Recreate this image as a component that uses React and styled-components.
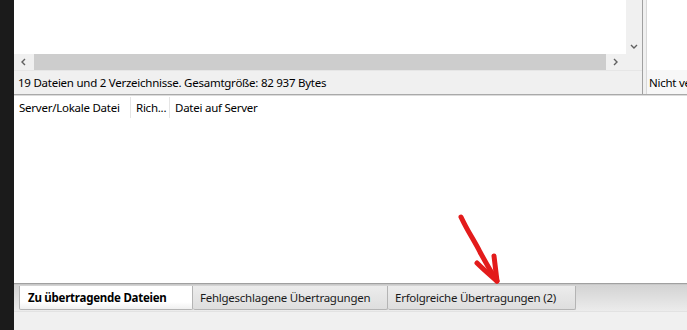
import React from "react";
import styled, { createGlobalStyle } from "styled-components";

const Global = createGlobalStyle`
  html, body { margin: 0; padding: 0; background: #1b1b1b; }
  body { font-family: "Noto Sans", "Open Sans", sans-serif; font-size: 11.5px; letter-spacing: -0.25px; color: #000; }
  #root { width: 687px; height: 330px; overflow: hidden; }
`;

const Window = styled.div`
  position: relative;
  display: flex;
  width: 687px;
  height: 330px;
  overflow: hidden;
`;

const DarkStrip = styled.div`
  width: 14px;
  flex: none;
  background: #1b1b1b;
`;

const Main = styled.div`
  flex: 1;
  display: flex;
  flex-direction: column;
  min-width: 0;
  background: #fff;
`;

const TopArea = styled.div`
  display: flex;
  height: 94px;
  flex: none;
  border-bottom: 1px solid #a9a9a9;
  box-shadow: 0 1px 0 #dcdcdc;
`;

const LeftColumn = styled.div`
  width: 628px;
  flex: none;
  display: flex;
  flex-direction: column;
`;

const ListRow = styled.div`
  display: flex;
  height: 54px;
`;

const ListContent = styled.div`
  flex: 1;
  background: #fff;
`;

const VScroll = styled.div`
  width: 16px;
  flex: none;
  background: #f0f0f0;
  display: flex;
  flex-direction: column;
  justify-content: flex-end;
  align-items: center;
  padding-bottom: 3px;
  box-sizing: border-box;
`;

const HScrollRow = styled.div`
  display: flex;
  height: 16px;
  background: #f0f0f0;
`;

const HScroll = styled.div`
  flex: 1;
  display: flex;
  align-items: center;
`;

const ArrowBtn = styled.div`
  width: 20px;
  flex: none;
  display: flex;
  align-items: center;
  justify-content: center;
`;

const Thumb = styled.div`
  flex: 1;
  height: 16px;
  background: #cdcdcd;
`;

const Corner = styled.div`
  width: 16px;
  flex: none;
  background: #f0f0f0;
`;

const StatusBar = styled.div`
  flex: 1;
  display: flex;
  align-items: center;
  padding-left: 4px;
  background: #f0f0f0;
  white-space: nowrap;
  overflow: hidden;
  border-top: 1px solid #e6e6e6;
`;

const Splitter = styled.div`
  width: 5px;
  flex: none;
  background: #f0f0f0;
  border-left: 1px solid #a0a0a0;
  border-right: 1px solid #d8d8d8;
  box-sizing: border-box;
`;

const RightColumn = styled.div`
  flex: 1;
  min-width: 0;
  display: flex;
  flex-direction: column;
  overflow: hidden;
`;

const RightList = styled.div`
  height: 70px;
  background: #fff;
`;

const RightStatus = styled.div`
  flex: 1;
  display: flex;
  align-items: center;
  padding-left: 2px;
  background: #f7f7f7;
  white-space: nowrap;
  overflow: hidden;
`;

const LowerPane = styled.div`
  flex: 1;
  display: flex;
  flex-direction: column;
  background: #fff;
  margin-top: 2px;
`;

const HeaderRow = styled.div`
  display: flex;
  height: 21px;
  flex: none;
`;

const HeaderCell = styled.div`
  width: ${(p) => p.$w}px;
  flex: ${(p) => (p.$w ? "none" : "1")};
  box-sizing: border-box;
  padding-left: 5px;
  display: flex;
  align-items: center;
  white-space: nowrap;
  border-right: ${(p) => (p.$last ? "none" : "1px solid #e5e5e5")};
`;

const ListBody = styled.div`
  flex: 1;
  background: #fff;
`;

const TabBar = styled.div`
  height: 28px;
  flex: none;
  display: flex;
  align-items: flex-start;
  padding-left: 5px;
  padding-top: 2px;
  box-sizing: border-box;
  border-top: 1px solid #a0a0a0;
  background: linear-gradient(#d2d2d2, #ececec);
  box-shadow: inset 0 1px 0 #c8c8c8;
`;

const Tab = styled.div`
  box-sizing: border-box;
  width: ${(p) => p.$w}px;
  height: 24px;
  display: flex;
  align-items: center;
  padding-left: ${(p) => (p.$active ? 8 : 7)}px;
  white-space: nowrap;
  font-weight: ${(p) => (p.$active ? 700 : 400)};
  border: 1px solid #b4b4b4;
  border-top: none;
  border-left: ${(p) => (p.$first ? "1px solid #b4b4b4" : "none")};
  border-radius: 0 0 2px 2px;
  background: ${(p) =>
    p.$active
      ? "linear-gradient(#ffffff 70%, #f0f0f0)"
      : "linear-gradient(#ececec, #dedede)"};
  color: ${(p) => (p.$active ? "#000" : "#1a1a1a")};
`;

const BottomStrip = styled.div`
  height: 18px;
  flex: none;
  background: #f0f0f0;
  border-top: 1px solid #e2e2e2;
`;

const Annotation = styled.svg`
  position: absolute;
  left: 0;
  top: 0;
  pointer-events: none;
`;

const Chevron = ({ dir }) => {
  const paths = {
    left: "M5 1 L2 4 L5 7",
    right: "M2 1 L5 4 L2 7",
    down: "M1 2 L4 5 L7 2",
  };
  return (
    <svg width="8" height="8" viewBox="0 0 8 8">
      <path d={paths[dir]} fill="none" stroke="#606060" strokeWidth="1.4" />
    </svg>
  );
};

export default function App() {
  return (
    <>
      <Global />
      <Window>
        <DarkStrip />
        <Main>
          <TopArea>
            <LeftColumn>
              <ListRow>
                <ListContent />
                <VScroll>
                  <Chevron dir="down" />
                </VScroll>
              </ListRow>
              <HScrollRow>
                <HScroll>
                  <ArrowBtn>
                    <Chevron dir="left" />
                  </ArrowBtn>
                  <Thumb />
                  <ArrowBtn>
                    <Chevron dir="right" />
                  </ArrowBtn>
                </HScroll>
                <Corner />
              </HScrollRow>
              <StatusBar>19 Dateien und 2 Verzeichnisse. Gesamtgröße: 82 937 Bytes</StatusBar>
            </LeftColumn>
            <Splitter />
            <RightColumn>
              <RightList />
              <RightStatus>Nicht verbunden</RightStatus>
            </RightColumn>
          </TopArea>
          <LowerPane>
            <HeaderRow>
              <HeaderCell $w={117}>Server/Lokale Datei</HeaderCell>
              <HeaderCell $w={39}>Rich...</HeaderCell>
              <HeaderCell $last>Datei auf Server</HeaderCell>
            </HeaderRow>
            <ListBody />
            <TabBar>
              <Tab $active $first $w={174}>Zu übertragende Dateien</Tab>
              <Tab $w={195}>Fehlgeschlagene Übertragungen</Tab>
              <Tab $w={188}>Erfolgreiche Übertragungen (2)</Tab>
            </TabBar>
            <BottomStrip />
          </LowerPane>
        </Main>
        <Annotation width="687" height="330" viewBox="0 0 687 330">
          <path
            d="M461 217 C468 232 474 240 480 252 C486 263 491 272 497 281"
            fill="none"
            stroke="#e31b1b"
            strokeWidth="5"
            strokeLinecap="round"
          />
          <path
            d="M477 263 C484 270 490 275 497 281 C496 273 495 264 494 256"
            fill="none"
            stroke="#e31b1b"
            strokeWidth="5"
            strokeLinecap="round"
            strokeLinejoin="round"
          />
        </Annotation>
      </Window>
    </>
  );
}
